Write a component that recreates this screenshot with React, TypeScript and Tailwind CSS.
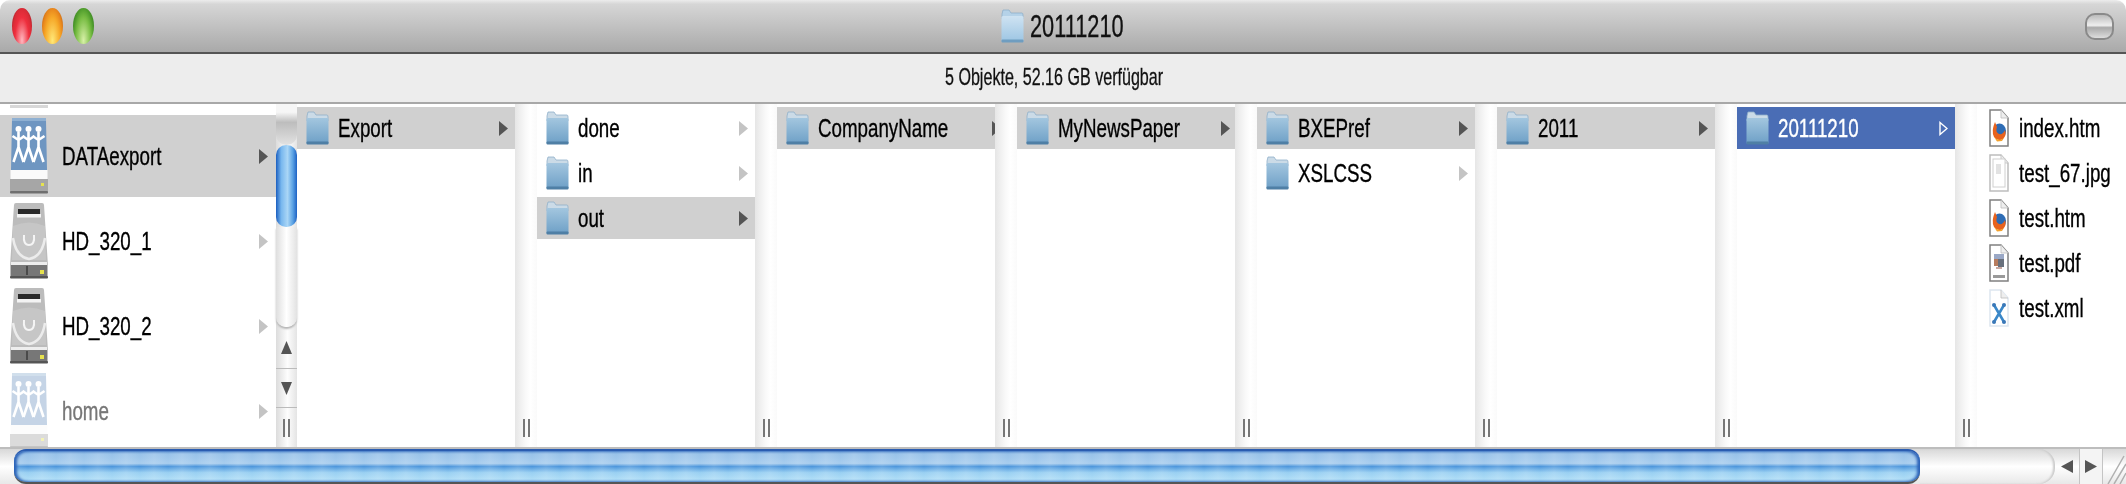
const font = "font-['Liberation_Sans',Arial,sans-serif]";

function Folder({ light = false }: { light?: boolean }) {
  const id = light ? 'folder-light' : 'folder-row';
  return (
    <svg width="23" height="34" viewBox="0 0 23 34" className="shrink-0">
      <defs>
        <linearGradient id={id} x1="0" y1="0" x2="0" y2="1">
          <stop offset="0" stopColor={light ? '#cfe3f2' : '#a3c6df'} />
          <stop offset="1" stopColor={light ? '#9cc5e3' : '#6d9fc6'} />
        </linearGradient>
      </defs>
      <path d="M1 5 L2 1 H8 L10 4 H21 Q22 4 22 6 V10 H1 Z" fill={light ? '#b5d2e8' : '#cbdbe7'} stroke="#8fb0ca" strokeWidth="0.8" />
      <rect x="0.5" y="7" width="22" height="26" rx="1.5" fill={`url(#${id})`} />
      <rect x="0.5" y="30.5" width="22" height="3" rx="1" fill={light ? '#6f9dc0' : '#4f7fa5'} />
    </svg>
  );
}

function People() {
  return (
    <g stroke="#fff" fill="none">
      {[10.5, 20.5, 30.5].map((x) => (
        <g key={x}>
          <circle cx={x} cy="12" r="3" fill="#fff" stroke="none" />
          <path d={`M${x} 15 V30 M${x - 6} 19 L${x} 23 L${x + 6} 19 M${x} 30 L${x - 5} 45 M${x} 30 L${x + 5} 45`} strokeWidth="2.6" />
        </g>
      ))}
    </g>
  );
}

function NetDrive({ dim = false }: { dim?: boolean }) {
  return (
    <svg width="42" height="78" viewBox="0 0 42 78" className={`shrink-0 ${dim ? 'opacity-40' : ''}`}>
      <path d="M5 1 H37 Q38 1 38 3 L39 53 H3 L4 3 Q4 1 5 1 Z" fill="#6f96c1" />
      <rect x="4" y="1" width="34" height="3" fill="#8fb0d2" />
      <People />
      <rect x="2.5" y="53" width="37" height="9" fill="#fafafa" />
      <path d="M2 62 H40 V73 Q40 76 37 76 H5 Q2 76 2 73 Z" fill="#a6a6a6" />
      <rect x="2" y="74" width="38" height="2.5" rx="1" fill="#6f6f6f" />
      <rect x="33" y="66" width="3" height="3" fill="#e6e24e" />
    </svg>
  );
}

function Disk() {
  return (
    <svg width="42" height="78" viewBox="0 0 42 78" className="shrink-0">
      <path d="M6 3 Q6 1 8 1 H34 Q36 1 36 3 L40 64 V74 Q40 76 38 76 H4 Q2 76 2 74 V64 Z" fill="#bcbcbc" />
      <rect x="10" y="7" width="22" height="5" fill="#2a2a2a" />
      <rect x="9" y="12" width="24" height="3.5" fill="#f3f3f3" />
      <path d="M5 24 Q21 17 37 24 L38 58 H4 Z" fill="#c6c6c6" />
      <path d="M5 36 Q8 55 21 57 Q34 55 37 36" fill="none" stroke="#ececec" strokeWidth="2.5" />
      <path d="M16 33 Q15 43 21 43 Q27 43 26 33" fill="none" stroke="#f5f5f5" strokeWidth="2" />
      <rect x="3" y="60" width="36" height="3" fill="#eeeeee" />
      <rect x="3" y="63" width="36" height="11" fill="#777" />
      <rect x="18" y="64" width="2" height="9" fill="#4a4a4a" />
      <rect x="32" y="68" width="4" height="4" fill="#e6e24e" />
      <rect x="2" y="74" width="38" height="2.5" rx="1" fill="#555" />
    </svg>
  );
}

function Page({ children, stroke = '#808080' }: { children?: React.ReactNode; stroke?: string }) {
  return (
    <svg width="20" height="38" viewBox="0 0 20 38" className="shrink-0">
      <path d="M1 1 H12 L19 9 V37 H1 Z" fill="#fff" stroke={stroke} strokeWidth="1.5" />
      <path d="M12 1 V9 H19" fill="#eee" stroke="#bbb" strokeWidth="0.8" />
      {children}
    </svg>
  );
}

function DocIcon({ kind }: { kind: string }) {
  if (kind === 'firefox')
    return (
      <Page>
        <ellipse cx="10.5" cy="22" rx="6.5" ry="7.5" fill="#2d6cb5" />
        <path d="M6 13 Q2 22 5 28 Q9 33 14 30 Q18 26 16 21 Q14 26 10 25 Q6 23 8 18 Z" fill="#e8631e" />
        <path d="M5 28 Q10 33 15 29 L13 32 L8 32.5 Z" fill="#f3a12b" />
      </Page>
    );
  if (kind === 'jpg')
    return (
      <Page stroke="#bdbdbd">
        <rect x="4" y="5" width="12" height="28" fill="#fff" stroke="#d0d0d0" />
        <rect x="7" y="10" width="5" height="10" fill="#e2e2e2" />
      </Page>
    );
  if (kind === 'pdf')
    return (
      <Page>
        <rect x="5" y="10" width="10" height="5" fill="#9aa8c6" />
        <rect x="5" y="15" width="4" height="7" fill="#b77c5e" />
        <rect x="9" y="15" width="6" height="8" fill="#68707c" />
        <rect x="7" y="23" width="6" height="2" fill="#c8a8a0" />
        <rect x="4" y="31" width="12" height="3" fill="#9a9a9a" />
      </Page>
    );
  return (
    <Page stroke="#dde6f0">
      <path d="M5 16 L15 33 M15 16 L5 33" stroke="#3a87c8" strokeWidth="2.6" />
      <g fill="#3a78b8">
        <circle cx="5" cy="16" r="2" />
        <circle cx="15" cy="16" r="2" />
        <circle cx="5" cy="33" r="2" />
        <circle cx="15" cy="33" r="2" />
      </g>
    </Page>
  );
}

function Arrow({ tone }: { tone: 'dark' | 'pale' | 'white' }) {
  if (tone === 'white')
    return (
      <svg width="9" height="15" viewBox="0 0 9 15" className="shrink-0">
        <path d="M1 1.5 L8 7.5 L1 13.5 Z" fill="none" stroke="#fff" strokeWidth="1.4" />
      </svg>
    );
  return (
    <svg width="9" height="15" viewBox="0 0 9 15" className="shrink-0">
      <path d="M0 0 L9 7.5 L0 15 Z" fill={tone === 'dark' ? '#555' : '#c4c4c4'} />
    </svg>
  );
}

function Label({ text, className = '' }: { text: string; className?: string }) {
  return (
    <span className={`inline-block origin-left scale-x-[0.75] whitespace-nowrap text-[25px] leading-none [-webkit-text-stroke:0.35px_currentColor] blur-[0.3px] ${className}`}>
      {text}
    </span>
  );
}

type Row = { name: string; state?: 'on' | 'sel' };

function FolderColumn({ rows, width = 'w-[218px]' }: { rows: Row[]; width?: string }) {
  return (
    <div className={`${width} shrink-0 pt-[3px]`}>
      {rows.map((r) => (
        <div
          key={r.name}
          className={`flex h-[42px] mb-[3px] items-center pl-[9px] pr-[7px] ${
            r.state === 'on' ? 'bg-[#d0d0d0]' : r.state === 'sel' ? 'bg-[#4a6db5]' : ''
          }`}
        >
          <Folder />
          <Label text={r.name} className={`ml-[9px] flex-1 ${r.state === 'sel' ? 'text-white' : 'text-black'}`} />
          <Arrow tone={r.state === 'sel' ? 'white' : r.state === 'on' ? 'dark' : 'pale'} />
        </div>
      ))}
    </div>
  );
}

function Gutter({ width = 'w-[22px]' }: { width?: string }) {
  return (
    <div className={`${width} shrink-0 flex flex-col justify-end items-center pb-[10px] bg-[linear-gradient(90deg,#e6e6e6,#f8f8f8_45%,#fff_70%,#fafafa)]`}>
      <Grip />
    </div>
  );
}

function Grip() {
  return (
    <div className="flex gap-[3px] h-[18px]">
      <div className="w-[2px] bg-[#777]" />
      <div className="w-[2px] bg-[#777]" />
    </div>
  );
}

function VScroll() {
  return (
    <div className="w-[21px] shrink-0 flex flex-col items-stretch bg-[linear-gradient(90deg,#dcdcdc,#fdfdfd_55%,#e4e4e4)]">
      <div className="h-[41px] rounded-b-[10px] bg-[linear-gradient(180deg,#f6f6f6_20%,#bdbdbd_45%,#e2e2e2)]" />
      <div className="h-[82px] rounded-[10px] bg-[linear-gradient(90deg,#1b5fc0,#78b7ee_25%,#aad6f6_55%,#5aa2e4_80%,#1d62c4)]" />
      <div className="h-[100px] rounded-b-[10px] bg-[linear-gradient(90deg,#dedede,#fff_50%,#e2e2e2)] shadow-[0_2px_2px_#b5b5b5]" />
      <div className="h-[41px] flex items-center justify-center">
        <svg width="11" height="13" viewBox="0 0 11 13"><path d="M5.5 0 L11 13 H0 Z" fill="#555" /></svg>
      </div>
      <div className="h-[40px] flex items-center justify-center border-t border-b border-[#bbb]">
        <svg width="11" height="13" viewBox="0 0 11 13"><path d="M5.5 13 L11 0 H0 Z" fill="#555" /></svg>
      </div>
      <div className="flex-1 flex items-center justify-center">
        <Grip />
      </div>
    </div>
  );
}

const volumes = [
  { name: 'DATAexport', icon: <NetDrive />, on: true },
  { name: 'HD_320_1', icon: <Disk /> },
  { name: 'HD_320_2', icon: <Disk /> },
  { name: 'home', icon: <NetDrive dim />, dim: true },
];

const files = [
  { name: 'index.htm', kind: 'firefox' },
  { name: 'test_67.jpg', kind: 'jpg' },
  { name: 'test.htm', kind: 'firefox' },
  { name: 'test.pdf', kind: 'pdf' },
  { name: 'test.xml', kind: 'xml' },
];

export default function App() {
  return (
    <div className={`w-[2126px] h-[484px] overflow-hidden flex flex-col bg-white ${font}`}>
      <div className="h-[54px] shrink-0 rounded-t-[10px] border-b-2 border-[#555] bg-[linear-gradient(180deg,#ececec_0,#d6d6d6_8%,#a9a9a9_100%)] grid grid-cols-[1fr_auto_1fr] items-center px-[12px]">
        <div className="flex gap-[10px]">
          <div className="w-[20px] h-[36px] rounded-[50%] bg-[radial-gradient(ellipse_at_50%_90%,#ffb8c0,#ee2f3e_50%,#d92b36_70%,#7c1a1e)]" />
          <div className="w-[21px] h-[36px] rounded-[50%] bg-[radial-gradient(ellipse_at_50%_90%,#ffe878,#f6a828_50%,#e8861c_70%,#a55417)]" />
          <div className="w-[21px] h-[36px] rounded-[50%] bg-[radial-gradient(ellipse_at_50%_90%,#d8f0a8,#79bd44_50%,#4f9c2c_70%,#25691c)]" />
        </div>
        <div className="flex items-center w-[124px]">
          <Folder light />
          <span className="ml-[6px] inline-block origin-left scale-x-[0.68] whitespace-nowrap text-[32px] leading-none text-[#111] [-webkit-text-stroke:0.35px_currentColor] blur-[0.3px]">
            20111210
          </span>
        </div>
        <div className="flex justify-end">
          <div className="w-[29px] h-[27px] rounded-[10px] border-2 border-[#8a8a8a] bg-[linear-gradient(180deg,#bbb,#eee_45%,#aaa_55%,#ddd)]" />
        </div>
      </div>

      <div className="h-[50px] shrink-0 border-b-2 border-[#a8a8a8] bg-[#ededed] flex items-center justify-center">
        <div className="w-[237px]">
          <span className="inline-block origin-left scale-x-[0.67] whitespace-nowrap text-[24px] leading-none text-[#111] [-webkit-text-stroke:0.3px_currentColor] blur-[0.3px]">
            5 Objekte, 52.16 GB verfügbar
          </span>
        </div>
      </div>

      <div className="flex-1 min-h-0 flex overflow-hidden">
        <div className="w-[276px] shrink-0">
          <div className="mt-px mb-[7px] ml-[10px] h-[3px] w-[38px] bg-[#d8d8d8]" />
          {volumes.map((v) => (
            <div key={v.name} className={`h-[82px] mb-[3px] flex items-center pl-[8px] pr-[8px] ${v.on ? 'bg-[#d0d0d0]' : ''}`}>
              {v.icon}
              <Label text={v.name} className={`ml-[12px] flex-1 ${v.dim ? 'text-[#777]' : 'text-black'}`} />
              <Arrow tone={v.on ? 'dark' : 'pale'} />
            </div>
          ))}
        </div>
        <VScroll />
        <FolderColumn width="w-[218px]" rows={[{ name: 'Export', state: 'on' }]} />
        <Gutter />
        <FolderColumn rows={[{ name: 'done' }, { name: 'in' }, { name: 'out', state: 'on' }]} />
        <Gutter />
        <FolderColumn rows={[{ name: 'CompanyName', state: 'on' }]} />
        <Gutter />
        <FolderColumn rows={[{ name: 'MyNewsPaper', state: 'on' }]} />
        <Gutter />
        <FolderColumn rows={[{ name: 'BXEPref', state: 'on' }, { name: 'XSLCSS' }]} />
        <Gutter />
        <FolderColumn rows={[{ name: '2011', state: 'on' }]} />
        <Gutter />
        <FolderColumn rows={[{ name: '20111210', state: 'sel' }]} />
        <Gutter />
        <div className="flex-1 pt-[3px] pl-[12px]">
          {files.map((f) => (
            <div key={f.name} className="h-[42px] mb-[3px] flex items-center">
              <DocIcon kind={f.kind} />
              <Label text={f.name} className="ml-[10px] text-black" />
            </div>
          ))}
        </div>
      </div>

      <div className="h-[37px] shrink-0 flex items-stretch border-t-2 border-[#bdbdbd] bg-[linear-gradient(180deg,#d8d8d8,#fff_50%,#e8e8e8)]">
        <div className="w-[14px] shrink-0" />
        <div className="w-[1906px] shrink-0 rounded-[12px] border-t-2 border-b-2 border-t-[#2a5cb0] border-b-[#555] shadow-[inset_3px_0_3px_#2a62b8,inset_-3px_0_3px_#2a62b8] bg-[repeating-linear-gradient(90deg,rgba(255,255,255,0.14)_0,rgba(255,255,255,0)_14px,rgba(255,255,255,0.14)_28px),linear-gradient(180deg,#93bfe8_0,#a8cdee_40%,#4e97dc_50%,#9ad0f2_70%,#b6e2f8_100%)]" />
        <div className="w-[135px] shrink-0 rounded-r-[16px] shadow-[inset_-2px_0_2px_#ccc]" />
        <div className="w-[24px] shrink-0 flex items-center justify-center">
          <svg width="12" height="13" viewBox="0 0 12 13"><path d="M0 6.5 L12 0 V13 Z" fill="#555" /></svg>
        </div>
        <div className="w-[24px] shrink-0 flex items-center justify-center border-l border-r border-[#c4c4c4] bg-[#f4f4f4]">
          <svg width="12" height="13" viewBox="0 0 12 13"><path d="M12 6.5 L0 0 V13 Z" fill="#555" /></svg>
        </div>
        <div className="flex-1 flex items-end justify-end">
          <svg width="20" height="32" viewBox="0 0 20 32"><path d="M2 32 L18 4 M8 32 L20 12 M14 32 L20 21" stroke="#b0b0b0" strokeWidth="1.5" /></svg>
        </div>
      </div>
    </div>
  );
}
